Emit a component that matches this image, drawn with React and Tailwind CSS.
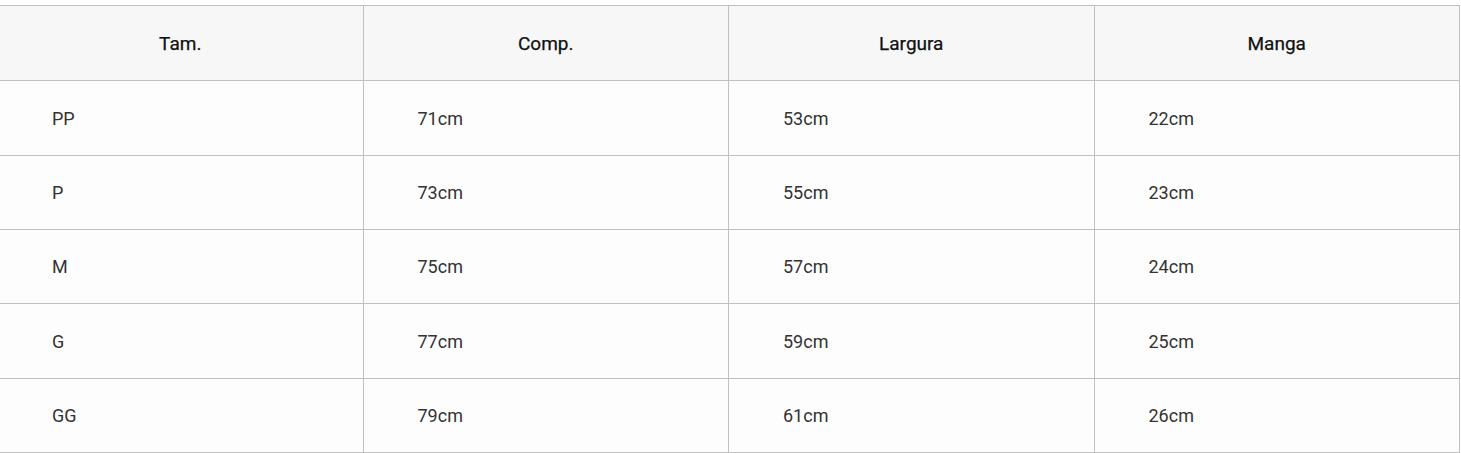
export default function App() {
  const headers = ["Tam.", "Comp.", "Largura", "Manga"];
  const rows = [
    ["PP", "71cm", "53cm", "22cm"],
    ["P", "73cm", "55cm", "23cm"],
    ["M", "75cm", "57cm", "24cm"],
    ["G", "77cm", "59cm", "25cm"],
    ["GG", "79cm", "61cm", "26cm"],
  ];
  const heights = ["h-[75px]", "h-[74px]", "h-[74px]", "h-[75px]", "h-[74px]"];
  return (
    <div className="bg-white w-[1461px] h-[453px] overflow-hidden pt-[5px]" style={{ fontFamily: "Roboto, 'Liberation Sans', sans-serif" }}>
      <div className="ml-[-2px] w-[1462px] border-t border-[#c0c0c0]">
        <div className="grid grid-cols-4 bg-[#f7f7f7]">
          {headers.map((h) => (
            <div key={h} className="h-[75px] border-b border-r border-[#c0c0c0] flex items-center justify-center pt-[2px] text-[19px] font-normal text-[#111111] [-webkit-text-stroke:0.25px_#111111]">
              {h}
            </div>
          ))}
        </div>
        {rows.map((r, i) => (
          <div key={i} className="grid grid-cols-4 bg-[#fdfdfd]">
            {r.map((c, j) => (
              <div key={j} className={`${heights[i]} border-b border-r border-[#c0c0c0] flex items-center pl-[54px] text-[18px] text-[#333333]`}>
                {c}
              </div>
            ))}
          </div>
        ))}
      </div>
    </div>
  );
}
